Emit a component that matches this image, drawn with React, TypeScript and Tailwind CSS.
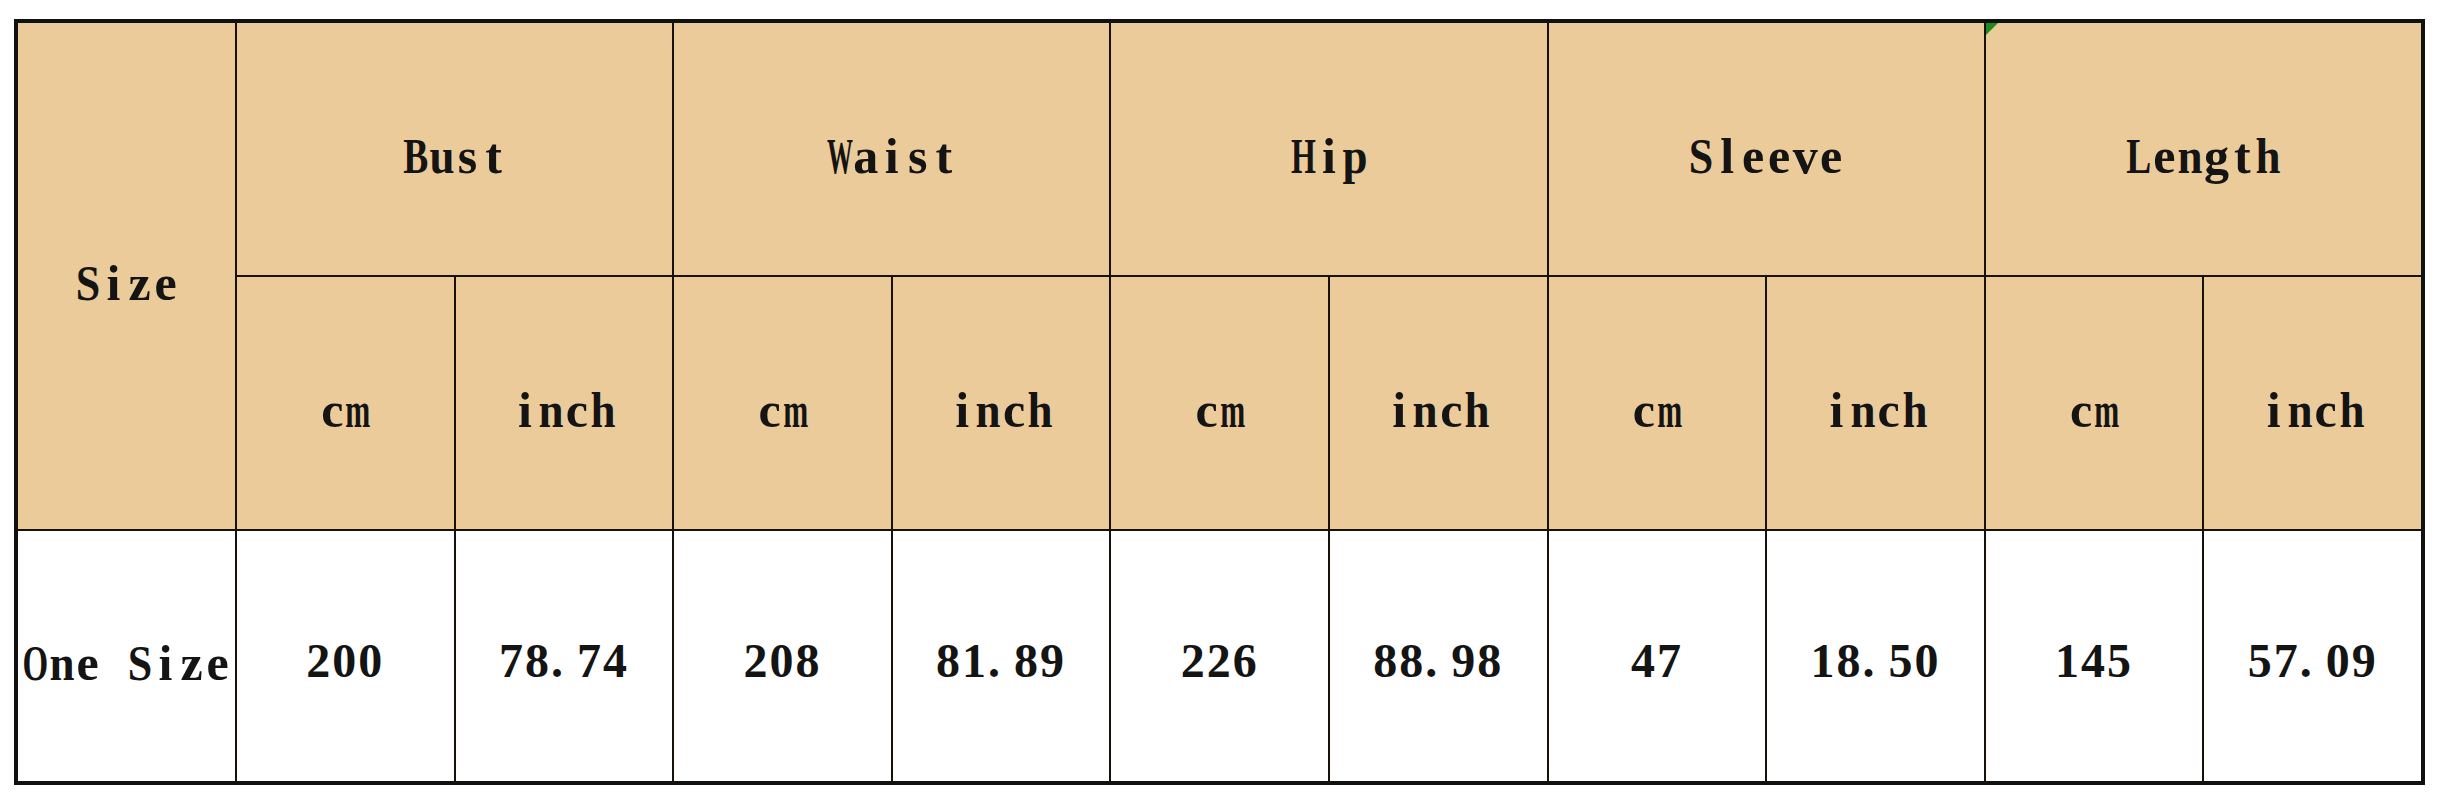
import React from "react";

const PEACH = "bg-[#ECCB9B]";

const SQUEEZE: Record<string, string> = {
  B: "scale-x-[0.75]",
  W: "scale-x-[0.52]",
  H: "scale-x-[0.64]",
  L: "scale-x-[0.75]",
  O: "scale-x-[0.66]",
  m: "scale-x-[0.6]",
  S: "scale-x-[0.88]",
  n: "scale-x-[0.9]",
  u: "scale-x-[0.9]",
  h: "scale-x-[0.9]",
  p: "scale-x-[0.9]",
};

function Label({ text }: { text: string }) {
  return (
    <span className="inline-flex font-['Liberation_Serif',serif] text-[50px] font-bold leading-none text-[#141414]">
      {text.split("").map((ch, i) => (
        <span key={i} className="inline-flex w-[26px] justify-center">
          <span className={`inline-block whitespace-pre ${SQUEEZE[ch] ?? ""}`}>{ch}</span>
        </span>
      ))}
    </span>
  );
}

function Num({ value }: { value: string }) {
  const parts = value.split(".");
  return (
    <span className="inline-block font-['Liberation_Serif',serif] text-[48px] font-bold leading-none tracking-[2px] text-[#141414]">
      {parts[0]}
      {parts.length > 1 && (
        <>
          <span className="mr-[12px]">.</span>
          {parts[1]}
        </>
      )}
    </span>
  );
}

const groups = ["Bust", "Waist", "Hip", "Sleeve", "Length"];
const values = ["200", "78.74", "208", "81.89", "226", "88.98", "47", "18.50", "145", "57.09"];

export default function App() {
  return (
    <div className="min-h-[800px] w-[2438px] bg-white pl-[14px] pt-[19px]">
      <div className="grid h-[766px] w-[2411px] grid-cols-[217px_repeat(10,1fr)] grid-rows-[252px_252px_250px] gap-[2px] border-4 border-[#111] bg-[#17110a]">
        <div className={`${PEACH} row-span-2 flex items-center justify-center pt-[14px]`}>
          <Label text="Size" />
        </div>
        {groups.map((g) => (
          <div key={g} className={`${PEACH} relative col-span-2 flex items-center justify-center pt-[14px]`}>
            {g === "Length" && (
              <svg className="absolute left-0 top-0" width="12" height="12" viewBox="0 0 12 12">
                <polygon points="0,0 12,0 0,12" fill="#1f8a1f" />
              </svg>
            )}
            <Label text={g} />
          </div>
        ))}
        {groups.flatMap((g) =>
          ["cm", "inch"].map((u) => (
            <div key={g + u} className={`${PEACH} flex items-center justify-center pt-[14px]`}>
              <Label text={u} />
            </div>
          ))
        )}
        <div className="flex items-center justify-center bg-white pt-[14px]">
          <Label text="One Size" />
        </div>
        {values.map((v, i) => (
          <div key={i} className="flex items-center justify-center bg-white pt-[10px]">
            <Num value={v} />
          </div>
        ))}
      </div>
    </div>
  );
}
